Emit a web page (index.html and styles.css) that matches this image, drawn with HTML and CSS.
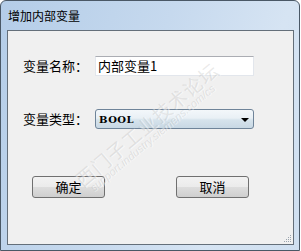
FILE: index.html
```html
<!DOCTYPE html>
<html>
<head>
	<title>增加内部变量</title>
	<meta charset="utf-8">
	<link rel="stylesheet" href="styles.css">
</head>
<body>
	<div class="window">
		<div class="titlebar">增加内部变量</div>
		<div class="client">
			<div class="form">
				<label class="lb">变量名称：</label>
				<div class="textbox">内部变量1</div>
				<label class="lb lb-type">变量类型：</label>
				<div class="combo">
					<span class="combo-text">BOOL</span>
					<span class="arrow"></span>
				</div>
			</div>
			<div class="buttons">
				<button class="btn">确定</button>
				<button class="btn">取消</button>
			</div>
			<svg class="grip" width="9" height="9" viewBox="0 0 9 9">
				<rect x="7" y="1" width="1" height="1" fill="#9aa4ae"/>
				<rect x="5" y="3" width="1" height="1" fill="#9aa4ae"/>
				<rect x="7" y="3" width="1" height="1" fill="#9aa4ae"/>
				<rect x="3" y="5" width="1" height="1" fill="#9aa4ae"/>
				<rect x="5" y="5" width="1" height="1" fill="#9aa4ae"/>
				<rect x="7" y="5" width="1" height="1" fill="#9aa4ae"/>
				<rect x="1" y="7" width="1" height="1" fill="#9aa4ae"/>
				<rect x="3" y="7" width="1" height="1" fill="#9aa4ae"/>
				<rect x="5" y="7" width="1" height="1" fill="#9aa4ae"/>
				<rect x="7" y="7" width="1" height="1" fill="#9aa4ae"/>
			</svg>
			<div class="watermark">
				<div class="wm-big">西门子工业技术论坛</div>
				<div class="wm-small">support.industry.siemens.com/cs</div>
			</div>
		</div>
	</div>
</body>
</html>
```

FILE: styles.css
```css
html, body{
	margin: 0;
	padding: 0;
	background: #fff;
}

body{
	width: 301px;
	height: 251px;
	overflow: hidden;
	font-family: "Noto Sans CJK SC", "Liberation Sans", sans-serif;
	font-size: 12px;
	color: #000;
}

.window{
	box-sizing: border-box;
	width: 300px;
	height: 251px;
	border: 1px solid #4a5866;
	border-radius: 6px 6px 0 0;
	background: linear-gradient(110deg, #b4cde8 0%, #c6d9ee 45%, #d6e4f3 75%, #cfdff0 100%);
	padding: 0 5px 5px 6px;
	display: flex;
	flex-direction: column;
}

.titlebar{
	height: 29px;
	line-height: 30px;
	padding-left: 1px;
	font-size: 12px;
	color: #000;
}

.client{
	position: relative;
	flex: 1;
	border: 1px solid #646f7a;
	background: #f0f0f0;
	overflow: hidden;
}

.form{
	display: grid;
	grid-template-columns: 72px 159px;
	grid-template-rows: 20px 20px;
	row-gap: 33px;
	padding: 25px 0 0 15px;
	align-items: center;
}

.lb{
	font-size: 13px;
	line-height: 20px;
}

.textbox{
	box-sizing: border-box;
	height: 20px;
	background: #fff;
	border: 1px solid #e2e6ec;
	border-top-color: #abadb3;
	padding-left: 2px;
	font-size: 13px;
	line-height: 18px;
}

.combo{
	box-sizing: border-box;
	height: 20px;
	border: 1px solid #6f8499;
	border-radius: 3px;
	background: linear-gradient(#f3f7fa 0%, #e9f0f5 45%, #d6e3ec 55%, #c8d8e4 100%);
	display: flex;
	align-items: center;
	justify-content: space-between;
	padding: 0 4px 0 3px;
}

.combo-text{
	font-family: "DejaVu Serif", "Liberation Serif", serif;
	font-size: 10px;
	font-weight: bold;
	letter-spacing: 0.5px;
}

.arrow{
	width: 0;
	height: 0;
	border-left: 4px solid transparent;
	border-right: 4px solid transparent;
	border-top: 4px solid #000;
	margin-top: 1px;
}

.buttons{
	display: flex;
	gap: 71px;
	padding: 47px 0 0 24px;
}

.btn{
	box-sizing: border-box;
	width: 73px;
	height: 22px;
	border: 1px solid #707070;
	border-radius: 3px;
	background: linear-gradient(#f2f2f2 0%, #ebebeb 50%, #dddddd 51%, #cfcfcf 100%);
	font-family: "Noto Sans CJK SC", sans-serif;
	font-size: 13px;
	line-height: 18px;
	padding: 0;
	color: #000;
}

.grip{
	position: absolute;
	right: 1px;
	bottom: 1px;
}

/* faint forum watermark laid over the dialog */
.watermark{
	position: absolute;
	left: 62px;
	top: 142px;
	transform: rotate(-40deg);
	transform-origin: left top;
	pointer-events: none;
	color: rgba(160, 160, 160, 0.22);
	text-shadow: 1px 1px 0 rgba(255, 255, 255, 0.5);
	white-space: nowrap;
}

.wm-big{
	font-size: 19px;
	line-height: 24px;
	letter-spacing: 1px;
}

.wm-small{
	font-family: "Liberation Sans", sans-serif;
	font-style: italic;
	font-size: 11px;
	line-height: 12px;
	margin-top: -4px;
	padding-left: 6px;
}
```
